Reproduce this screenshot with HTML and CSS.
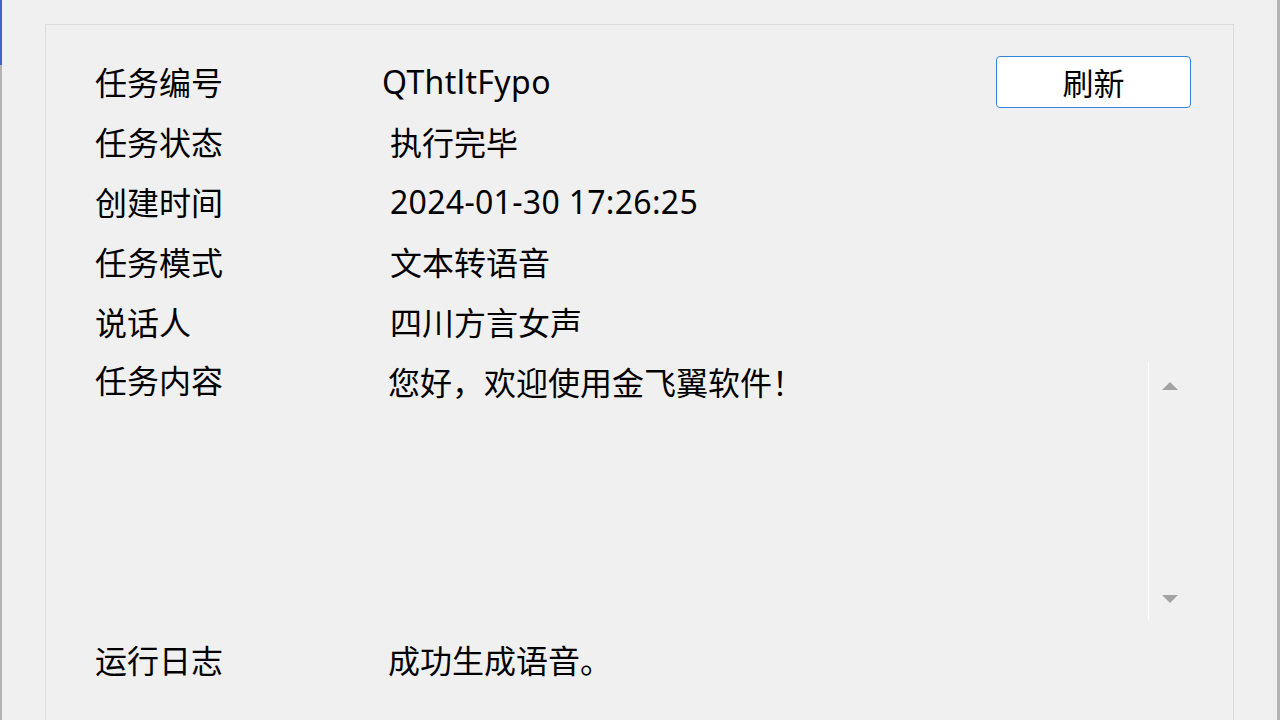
FILE: index.html
```html
<!DOCTYPE html>
<html lang="zh-CN">
<head>
    <meta charset="UTF-8">
    <title>任务详情</title>
    <link rel="stylesheet" href="styles.css">
</head>
<body>
    <div class="panel">
        <div class="row">
            <span class="label">任务编号</span>
            <span class="value value-id">QThtltFypo</span>
            <button class="refresh-btn">刷新</button>
        </div>
        <div class="row">
            <span class="label">任务状态</span>
            <span class="value">执行完毕</span>
        </div>
        <div class="row">
            <span class="label">创建时间</span>
            <span class="value value-latin">2024-01-30 17:26:25</span>
        </div>
        <div class="row">
            <span class="label">任务模式</span>
            <span class="value">文本转语音</span>
        </div>
        <div class="row">
            <span class="label">说话人</span>
            <span class="value">四川方言女声</span>
        </div>
        <div class="row row-memo">
            <span class="label">任务内容</span>
            <div class="memo">
                <div class="memo-text">您好，欢迎使用金飞翼软件！</div>
                <div class="memo-scroll">
                    <span class="arrow arrow-up"></span>
                    <span class="arrow arrow-down"></span>
                </div>
            </div>
        </div>
        <div class="row row-log">
            <span class="label">运行日志</span>
            <span class="value value-log">成功生成语音。</span>
        </div>
    </div>
</body>
</html>
```

FILE: styles.css
```css
html, body {
    margin: 0;
    height: 720px;
    overflow: hidden;
}
body {
    font-family: "Noto Sans", "Noto Sans CJK SC", sans-serif;
    font-size: 32px;
    color: #000;
    background:
        linear-gradient(#3f62c6, #3f62c6) 0 0 / 2px 65px no-repeat,
        linear-gradient(#b4b4b4, #b4b4b4) 0 0 / 2px 100% no-repeat,
        linear-gradient(#b4b4b4, #b4b4b4) 100% 0 / 3px 100% no-repeat,
        #f0f0f0;
}
.panel {
    margin: 24px 0 0 45px;
    width: 1189px;
    height: 720px;
    box-sizing: border-box;
    border: 1px solid #dcdcdc;
    padding: 26px 42px 0 49px;
}
.row {
    display: flex;
    align-items: center;
    height: 60px;
}
.label {
    width: 287px;
    flex-shrink: 0;
}
.value {
    flex: 1;
    padding-left: 8px;
}
.value-id {
    padding-left: 0;
    letter-spacing: 0.4px;
}
.value-latin {
    letter-spacing: 0.3px;
}
.refresh-btn {
    width: 195px;
    height: 52px;
    margin-top: 1px;
    background: #fff;
    border: 1px solid #2f86db;
    border-radius: 4px;
    font-family: inherit;
    font-size: 31px;
    color: #000;
    padding: 0;
}
.row-memo {
    height: 269px;
    align-items: flex-start;
}
.row-memo .label {
    line-height: 60px;
}
.memo {
    flex: 1;
    display: flex;
    height: 258px;
    margin-top: 11px;
    margin-left: -2px;
}
.memo-text {
    flex: 1;
    line-height: 42px;
    padding-left: 8px;
}
.memo-scroll {
    width: 42px;
    border-left: 1px solid #fff;
    display: flex;
    flex-direction: column;
    align-items: center;
    justify-content: space-between;
    padding: 20px 0 17px;
}
.arrow {
    width: 0;
    height: 0;
    border-left: 8px solid transparent;
    border-right: 8px solid transparent;
}
.arrow-up {
    border-bottom: 8px solid #a3a3a3;
}
.arrow-down {
    border-top: 8px solid #a3a3a3;
}
.row-log {
    margin-top: 9px;
}
.value-log {
    padding-left: 6px;
}
```
